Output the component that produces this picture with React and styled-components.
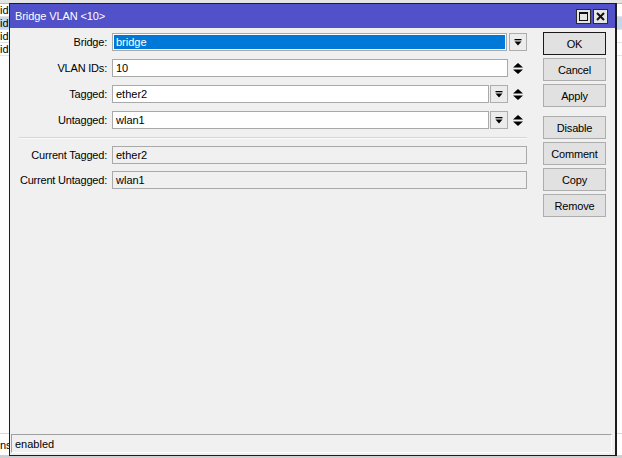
import React from "react";
import styled, { createGlobalStyle, css } from "styled-components";

const Global = createGlobalStyle`
  html, body { margin: 0; padding: 0; }
  body {
    width: 622px; height: 458px; overflow: hidden;
    font-family: "Liberation Sans", Arial, sans-serif;
    font-size: 11px; color: #000;
  }
  #root { width: 622px; height: 458px; }
`;

const Desktop = styled.div`
  position: relative;
  width: 622px;
  height: 458px;
  background: #f0f0f0;
  overflow: hidden;
  display: flex;
  flex-direction: column;
`;

const BgHeader = styled.div`
  height: 3px;
  background: #e4e4e4;
  border-bottom: 1px solid #b8b8b8;
`;

const BgRow = styled.div`
  height: 12px;
  border-bottom: 1px solid #e2e2e2;
  background: ${(p) => (p.$sel ? "#c3d8ef" : "#fff")};
  display: flex;
  align-items: center;
  font-size: 11px;
  line-height: 12px;
  white-space: nowrap;
`;

const BgFill = styled.div`
  flex: 1;
  background: #fdfdfd;
`;

const BgFooter = styled.div`
  height: 22px;
  background: #fff;
  border-top: 1px solid #d8d8d8;
  display: flex;
  align-items: center;
  padding-bottom: 2px;
  box-shadow: inset 0 -3px 0 #cfcfcf;
`;

const Dialog = styled.div`
  position: absolute;
  left: 9px;
  top: 3px;
  width: 605px;
  height: 451px;
  border: 1px solid #1c1c1c;
  border-right-width: 2px;
  background: #f0f0f0;
  display: flex;
  flex-direction: column;
`;

const TitleBar = styled.div`
  height: 24px;
  background: #5151c9;
  display: flex;
  align-items: center;
  padding: 0 7px 0 5px;
  gap: 2px;
`;

const Title = styled.div`
  flex: 1;
  color: #fff;
  font-size: 11px;
  letter-spacing: -0.1px;
`;

const TitleBtn = styled.div`
  width: 13px;
  height: 13px;
  background: #e6e6e6;
  border: 1px solid #2a2a2a;
  display: flex;
  align-items: center;
  justify-content: center;
`;

const Body = styled.div`
  flex: 1;
  display: flex;
  flex-direction: column;
  padding: 4px 8px 2px 0;
`;

const Main = styled.div`
  flex: 1;
  display: flex;
  gap: 16px;
`;

const Form = styled.div`
  width: 508px;
  padding-left: 9px;
  padding-top: 1px;
  display: flex;
  flex-direction: column;
`;

const Row = styled.div`
  display: flex;
  align-items: center;
  height: 18px;
  margin-bottom: ${(p) => p.$mb ?? 8}px;
`;

const Label = styled.div`
  width: 88px;
  text-align: right;
  padding-right: 5px;
  white-space: nowrap;
  letter-spacing: -0.2px;
`;

const Field = styled.div`
  flex: 1;
  height: 18px;
  box-sizing: border-box;
  border: 1px solid #a9a9a9;
  background: ${(p) => (p.$ro ? "#f0f0f0" : "#fff")};
  padding: 1px;
  display: flex;
`;

const FieldText = styled.div`
  flex: 1;
  padding-left: 2px;
  line-height: 14px;
  ${(p) =>
    p.$sel &&
    css`
      background: #0078d7;
      color: #fff;
    `}
`;

const DropBtn = styled.div`
  width: 18px;
  height: 18px;
  box-sizing: border-box;
  margin-left: ${(p) => p.$ml ?? 1}px;
  border: 1px solid #adadad;
  background: #ececec;
  display: flex;
  align-items: center;
  justify-content: center;
`;

const Spin = styled.div`
  width: 19px;
  height: 18px;
  display: flex;
  align-items: center;
  justify-content: center;
`;

const Separator = styled.div`
  height: 0;
  border-top: 1px solid #d6d6d6;
  border-bottom: 1px solid #fafafa;
  margin: 0 0 7px 0;
`;

const ButtonCol = styled.div`
  width: 63px;
  display: flex;
  flex-direction: column;
  gap: 3px;
`;

const Button = styled.div`
  height: 23px;
  box-sizing: border-box;
  border: 1px solid ${(p) => (p.$def ? "#1a1a1a" : "#adadad")};
  background: #e1e1e1;
  display: flex;
  align-items: center;
  justify-content: center;
  letter-spacing: -0.2px;
  margin-top: ${(p) => p.$mt ?? 0}px;
`;

const StatusBar = styled.div`
  height: 19px;
  box-sizing: border-box;
  margin-left: 1px;
  margin-right: -5px;
  border-top: 1px solid #a0a0a0;
  border-left: 1px solid #a0a0a0;
  border-right: 1px solid #fff;
  border-bottom: 1px solid #fff;
  display: flex;
  align-items: center;
  padding-left: 3px;
`;

const DropIcon = () => (
  <svg width="8" height="7" viewBox="0 0 8 7">
    <rect x="0.5" y="0" width="7" height="1.3" fill="#000" />
    <path d="M0.5 2.5 L7.5 2.5 L4 6.5 Z" fill="#000" />
  </svg>
);

const SpinIcon = () => (
  <svg width="10" height="11" viewBox="0 0 10 11">
    <path d="M0 4.5 L10 4.5 L5 0 Z" fill="#000" />
    <path d="M0 6.5 L10 6.5 L5 11 Z" fill="#000" />
  </svg>
);

const MaxIcon = () => (
  <svg width="9" height="9" viewBox="0 0 9 9">
    <rect x="0.5" y="0.5" width="8" height="8" fill="none" stroke="#111" strokeWidth="1" />
    <rect x="0" y="0" width="9" height="2" fill="#111" />
  </svg>
);

const CloseIcon = () => (
  <svg width="9" height="9" viewBox="0 0 9 9">
    <path d="M1 1 L8 8 M8 1 L1 8" stroke="#111" strokeWidth="2" />
  </svg>
);

export default function App() {
  return (
    <>
      <Global />
      <Desktop>
        <BgHeader />
        <BgRow>id</BgRow>
        <BgRow $sel>id</BgRow>
        <BgRow>id</BgRow>
        <BgRow>id</BgRow>
        <BgFill />
        <BgFooter>ns</BgFooter>

        <Dialog>
          <TitleBar>
            <Title>Bridge VLAN &lt;10&gt;</Title>
            <TitleBtn>
              <MaxIcon />
            </TitleBtn>
            <TitleBtn>
              <CloseIcon />
            </TitleBtn>
          </TitleBar>
          <Body>
            <Main>
              <Form>
                <Row>
                  <Label>Bridge:</Label>
                  <Field>
                    <FieldText $sel>bridge</FieldText>
                  </Field>
                  <DropBtn $ml={2}>
                    <DropIcon />
                  </DropBtn>
                </Row>
                <Row>
                  <Label>VLAN IDs:</Label>
                  <Field>
                    <FieldText>10</FieldText>
                  </Field>
                  <Spin>
                    <SpinIcon />
                  </Spin>
                </Row>
                <Row>
                  <Label>Tagged:</Label>
                  <Field>
                    <FieldText>ether2</FieldText>
                  </Field>
                  <DropBtn>
                    <DropIcon />
                  </DropBtn>
                  <Spin>
                    <SpinIcon />
                  </Spin>
                </Row>
                <Row $mb={8}>
                  <Label>Untagged:</Label>
                  <Field>
                    <FieldText>wlan1</FieldText>
                  </Field>
                  <DropBtn>
                    <DropIcon />
                  </DropBtn>
                  <Spin>
                    <SpinIcon />
                  </Spin>
                </Row>
                <Separator />
                <Row $mb={7}>
                  <Label>Current Tagged:</Label>
                  <Field $ro>
                    <FieldText>ether2</FieldText>
                  </Field>
                </Row>
                <Row>
                  <Label>Current Untagged:</Label>
                  <Field $ro>
                    <FieldText>wlan1</FieldText>
                  </Field>
                </Row>
              </Form>
              <ButtonCol>
                <Button $def>OK</Button>
                <Button>Cancel</Button>
                <Button>Apply</Button>
                <Button $mt={6}>Disable</Button>
                <Button>Comment</Button>
                <Button>Copy</Button>
                <Button>Remove</Button>
              </ButtonCol>
            </Main>
            <StatusBar>enabled</StatusBar>
          </Body>
        </Dialog>
      </Desktop>
    </>
  );
}
